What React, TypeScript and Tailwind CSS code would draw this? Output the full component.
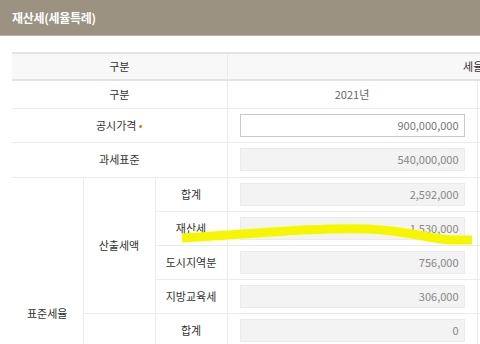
const font = { fontFamily: '"Noto Sans CJK KR", "Noto Sans", sans-serif' }

function Field({ value, editable = false }: { value: string; editable?: boolean }) {
  return (
    <div
      className={
        editable
          ? 'h-[23px] border border-[#c9c9c9] bg-white flex items-center justify-end pr-[5px] text-[11px] text-[#777]'
          : 'h-[23px] border border-[#ebebeb] bg-[#f3f3f3] flex items-center justify-end pr-[5px] text-[11px] text-[#888]'
      }
    >
      {value}
    </div>
  )
}

const line = 'border-[#ebebeb]'

function ValueCells({ value, editable = false }: { value: string; editable?: boolean }) {
  return (
    <>
      <td className={`px-[12px] border-l ${line}`}>
        <Field value={value} editable={editable} />
      </td>
      {/* second (off-screen) year column */}
      <td className={`border-l ${line}`} />
    </>
  )
}

export default function App() {
  const calc = [
    ['합계', '2,592,000'],
    ['재산세', '1,530,000'],
    ['도시지역분', '756,000'],
    ['지방교육세', '306,000'],
  ]

  return (
    <div className="relative w-[480px] h-[344px] overflow-hidden bg-white" style={font}>
      {/* Title bar */}
      <div className="h-[36px] bg-[#9b9282] border-b border-[#b9b2a6] flex items-center px-[12px]">
        <h1 className="text-[12px] font-bold text-white tracking-[-0.3px] pt-[1px]">재산세(세율특례)</h1>
      </div>

      <div className="pt-[16px] pl-[12px]">
        <table className="border-collapse table-fixed w-[727px] text-[11px] text-[#333]">
          <colgroup>
            <col className="w-[71px]" />
            <col className="w-[72px]" />
            <col className="w-[72px]" />
            <col className="w-[250px]" />
            <col className="w-[262px]" />
          </colgroup>
          <thead>
            <tr className="h-[27px] bg-[#f8f8f8] border-t-2 border-b-2 border-[#e3e3e3]">
              <th colSpan={3} className="font-normal text-center">구분</th>
              <th colSpan={2} className={`font-normal text-center border-l ${line}`}>세율특례</th>
            </tr>
          </thead>
          <tbody>
            <tr className={`h-[28px] border-b ${line}`}>
              <td colSpan={3} className="text-center">구분</td>
              <td className={`text-center border-l ${line} text-[#666]`}>2021년</td>
              <td className={`border-l ${line}`} />
            </tr>
            <tr className={`h-[34px] border-b ${line}`}>
              <td colSpan={3} className="text-center">
                공시가격 <span className="text-[#f26a1b]">•</span>
              </td>
              <ValueCells value="900,000,000" editable />
            </tr>
            <tr className={`h-[35px] border-b ${line}`}>
              <td colSpan={3} className="text-center">과세표준</td>
              <ValueCells value="540,000,000" />
            </tr>
            {calc.map(([label, value], i) => (
              <tr key={label} className={`h-[34px] border-b ${line}`}>
                {i === 0 && (
                  <td rowSpan={8} className="text-center align-middle">표준세율</td>
                )}
                {i === 0 && (
                  <td rowSpan={4} className={`text-center border-l ${line}`}>산출세액</td>
                )}
                <td className={`text-center border-l ${line}`}>{label}</td>
                <ValueCells value={value} />
              </tr>
            ))}
            <tr className={`h-[34px] border-b ${line}`}>
              <td rowSpan={4} className={`border-l ${line}`} />
              <td className={`text-center border-l ${line}`}>합계</td>
              <ValueCells value="0" />
            </tr>
            {['a', 'b', 'c'].map((k) => (
              <tr key={k} className={`h-[34px] border-b ${line}`}>
                <td className={`border-l ${line}`} />
                <ValueCells value="" />
              </tr>
            ))}
          </tbody>
        </table>
      </div>

      {/* Highlighter mark */}
      <svg className="absolute left-0 top-0 pointer-events-none" width="480" height="344">
        <path
          d="M182 238 C 250 234, 320 227, 368 229 C 410 231, 430 239, 452 240 L 472 240"
          fill="none"
          stroke="#f6f600"
          strokeWidth="9"
        />
      </svg>
    </div>
  )
}
